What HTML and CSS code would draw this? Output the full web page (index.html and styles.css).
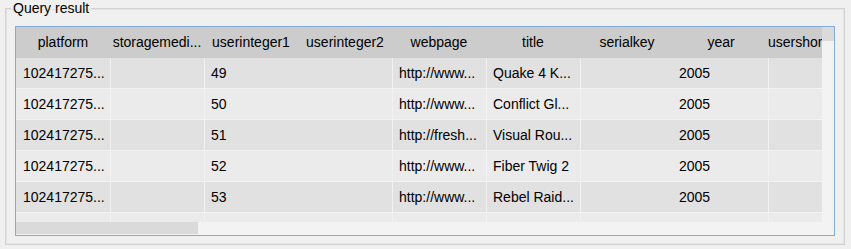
FILE: index.html
```html
<!DOCTYPE html>
<html lang="en">
<head>
    <meta charset="UTF-8">
    <title>Query result</title>
    <link rel="stylesheet" href="styles.css">
</head>
<body>
    <fieldset class="group">
        <legend>Query result</legend>

        <div class="listview">
            <div class="viewport">
                <table class="grid">
                    <thead>
                        <tr>
                            <th>platform</th>
                            <th>storagemedi...</th>
                            <th>userinteger1</th>
                            <th>userinteger2</th>
                            <th>webpage</th>
                            <th>title</th>
                            <th>serialkey</th>
                            <th>year</th>
                            <th class="left">usershortdescription</th>
                        </tr>
                    </thead>
                    <tbody>
                        <tr>
                            <td>102417275...</td><td></td><td>49</td><td></td>
                            <td>http://www...</td><td>Quake 4 K...</td><td></td><td>2005</td><td></td>
                        </tr>
                        <tr>
                            <td>102417275...</td><td></td><td>50</td><td></td>
                            <td>http://www...</td><td>Conflict Gl...</td><td></td><td>2005</td><td></td>
                        </tr>
                        <tr>
                            <td>102417275...</td><td></td><td>51</td><td></td>
                            <td>http://fresh...</td><td>Visual Rou...</td><td></td><td>2005</td><td></td>
                        </tr>
                        <tr>
                            <td>102417275...</td><td></td><td>52</td><td></td>
                            <td>http://www...</td><td>Fiber Twig 2</td><td></td><td>2005</td><td></td>
                        </tr>
                        <tr>
                            <td>102417275...</td><td></td><td>53</td><td></td>
                            <td>http://www...</td><td>Rebel Raid...</td><td></td><td>2005</td><td></td>
                        </tr>
                        <tr>
                            <td></td><td></td><td></td><td></td>
                            <td></td><td></td><td></td><td></td><td></td>
                        </tr>
                    </tbody>
                </table>
            </div>
            <div class="vscroll"><div class="vthumb"></div></div>
            <div class="hscroll"><div class="hthumb"></div></div>
            <div class="corner"></div>
        </div>
    </fieldset>
</body>
</html>
```

FILE: styles.css
```css
body {
    margin: 0;
    background-color: #f0f0f0;
    font-family: "Liberation Sans", Arial, sans-serif;
    font-size: 14px;
    color: #000;
}
.group {
    box-sizing: border-box;
    width: 840px;
    margin: 0 0 0 5px;
    padding: 10px 9px 8px 9px;
    border: 1px solid #d2d2d2;
    box-shadow: inset 0 0 0 1px #e4e4e4;
}
.group legend {
    margin-left: -4px;
    padding: 0 2px;
    line-height: 16px;
}
.listview {
    display: grid;
    grid-template-columns: 806px 12px;
    grid-template-rows: 195px 13px;
    border: 1px solid #84acd9;
    background-color: #f3f3f3;
}
.viewport {
    overflow: hidden;
}
.grid {
    width: 846px;
    table-layout: fixed;
    border-collapse: separate;
    border-spacing: 0;
}
.grid th {
    background-color: #cccccc;
    font-weight: normal;
    line-height: 31px;
    padding: 0 2px;
    text-align: center;
    white-space: nowrap;
    overflow: hidden;
}
.grid th.left {
    text-align: left;
    padding-left: 0;
}
.grid td {
    line-height: 30px;
    height: 30px;
    padding: 0 0 0 6px;
    border-bottom: 1px solid #f2f2f2;
    border-left: 1px solid #f2f2f2;
    white-space: nowrap;
    overflow: hidden;
}
.grid td:nth-child(1),
.grid td:nth-child(4) {
    border-left: none;
    padding-left: 7px;
}
.grid td:nth-child(8) {
    border-left: none;
    padding-left: 5px;
}
.grid tbody tr:nth-child(odd) td {
    background-color: #e1e1e1;
}
.grid tbody tr:nth-child(even) td {
    background-color: #ebebeb;
}
.vscroll {
    background-color: #f3f3f3;
}
.vthumb {
    height: 14px;
    background-color: #dadada;
}
.hscroll {
    background-color: #f3f3f3;
}
.hthumb {
    width: 182px;
    height: 12px;
    background-color: #dadada;
}
.corner {
    background-color: #f3f3f3;
}
```
